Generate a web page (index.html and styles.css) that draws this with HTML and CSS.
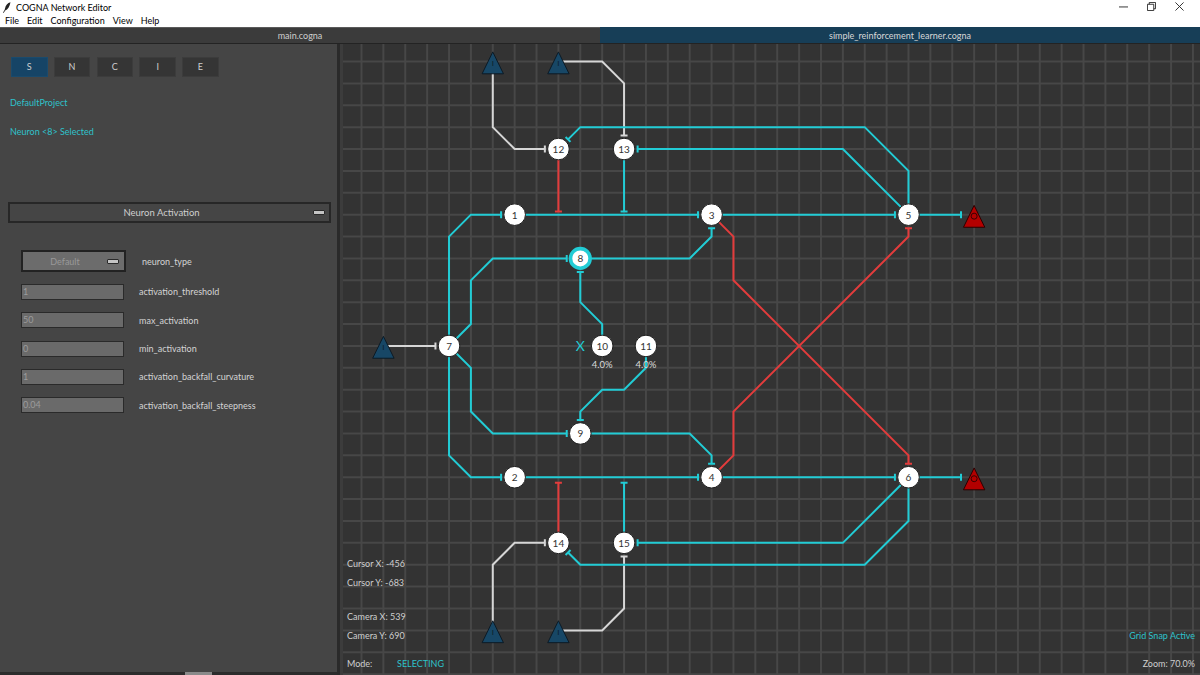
FILE: index.html
```html
<!DOCTYPE html>
<html lang="en">
<head>
<meta charset="utf-8">
<title>COGNA Network Editor</title>
<link rel="stylesheet" href="styles.css">
</head>
<body>
<div class="app">
  <header class="titlebar">
    <div class="title">
      <svg class="feather" width="9" height="11" viewBox="0 0 9 11"><path d="M8.5 0.3 C5.5 1 3.6 3.4 3 6.4 L2.6 8 L1 10.6 L1.6 10.9 L3.2 8.6 C5.8 7.8 7.6 4.8 8.5 0.3 Z" fill="#222"/></svg>
      <span>COGNA Network Editor</span>
    </div>
    <div class="winctrls">
      <span class="wc"><svg width="10" height="10" viewBox="0 0 10 10"><path d="M0 5.5H10" stroke="#222" stroke-width="1"/></svg></span>
      <span class="wc"><svg width="10" height="10" viewBox="0 0 10 10"><path d="M0.5 2.5H7.5V9.5H0.5Z M2.5 2.5V0.5H9.5V7.5H7.5" fill="none" stroke="#222" stroke-width="1"/></svg></span>
      <span class="wc"><svg width="10" height="10" viewBox="0 0 10 10"><path d="M0.5 0.5L9.5 9.5M9.5 0.5L0.5 9.5" stroke="#222" stroke-width="1"/></svg></span>
    </div>
  </header>
  <nav class="menubar">
    <span>File</span><span>Edit</span><span>Configuration</span><span>View</span><span>Help</span>
  </nav>
  <div class="tabs">
    <div class="tab">main.cogna</div>
    <div class="tab active">simple_reinforcement_learner.cogna</div>
  </div>
  <main class="workspace">
    <aside class="sidebar">
      <div class="modes">
        <div class="mode active">S</div>
        <div class="mode">N</div>
        <div class="mode">C</div>
        <div class="mode">I</div>
        <div class="mode">E</div>
      </div>
      <div class="info project">DefaultProject</div>
      <div class="info selected">Neuron &lt;8&gt; Selected</div>
      <div class="section-select">
        <span class="sel-label">Neuron Activation</span>
        <span class="indicator"></span>
      </div>
      <div class="form">
        <div class="row first">
          <div class="combo"><span class="sel-label">Default</span><span class="indicator"></span></div>
          <span class="label">neuron_type</span>
        </div>
        <div class="row"><div class="field">1</div><span class="label">activation_threshold</span></div>
        <div class="row"><div class="field">50</div><span class="label">max_activation</span></div>
        <div class="row"><div class="field">0</div><span class="label">min_activation</span></div>
        <div class="row"><div class="field">1</div><span class="label">activation_backfall_curvature</span></div>
        <div class="row"><div class="field">0.04</div><span class="label">activation_backfall_steepness</span></div>
      </div>
      <div class="hscroll"><div class="thumb"></div></div>
    </aside>
    <div class="splitter"></div>
    <section class="canvas">
      <svg class="board" width="857" height="631" viewBox="343 44 857 631">
        <g transform="translate(361.5 61.5) scale(21.88)">
          <path class="grid" d="M-1 -2V29M0 -2V29M1 -2V29M2 -2V29M3 -2V29M4 -2V29M5 -2V29M6 -2V29M7 -2V29M8 -2V29M9 -2V29M10 -2V29M11 -2V29M12 -2V29M13 -2V29M14 -2V29M15 -2V29M16 -2V29M17 -2V29M18 -2V29M19 -2V29M20 -2V29M21 -2V29M22 -2V29M23 -2V29M24 -2V29M25 -2V29M26 -2V29M27 -2V29M28 -2V29M29 -2V29M30 -2V29M31 -2V29M32 -2V29M33 -2V29M34 -2V29M35 -2V29M36 -2V29M37 -2V29M38 -2V29M-2 -1H39M-2 0H39M-2 1H39M-2 2H39M-2 3H39M-2 4H39M-2 5H39M-2 6H39M-2 7H39M-2 8H39M-2 9H39M-2 10H39M-2 11H39M-2 12H39M-2 13H39M-2 14H39M-2 15H39M-2 16H39M-2 17H39M-2 18H39M-2 19H39M-2 20H39M-2 21H39M-2 22H39M-2 23H39M-2 24H39M-2 25H39M-2 26H39M-2 27H39M-2 28H39"/>

          <!-- input connections (gray) -->
          <path class="link g" d="M6 0V3L7 4H8.38M8.38 3.84V4.16"/>
          <path class="link g" d="M9 0H11L12 1V3.38M11.84 3.38H12.16"/>
          <path class="link g" d="M1 13H3.38M3.38 12.84V13.16"/>
          <path class="link g" d="M6 26V23L7 22H8.38M8.38 21.84V22.16"/>
          <path class="link g" d="M9 26H11L12 25V22.62M11.84 22.62H12.16"/>

          <!-- excitatory (cyan) -->
          <path class="link c" d="M25 7V5L23 3H10L9.44 3.56M9.327 3.447L9.553 3.673"/>
          <path class="link c" d="M25 7L22 4H12.62M12.62 3.84V4.16"/>
          <path class="link c" d="M12 4V6.86M11.84 6.86H12.16"/>
          <path class="link c" d="M4 13V8L5 7H6.38M6.38 6.84V7.16"/>
          <path class="link c" d="M7 7H15.38M15.38 6.84V7.16"/>
          <path class="link c" d="M16 7H24.38M24.38 6.84V7.16"/>
          <path class="link c" d="M25 7H27.4M27.4 6.84V7.16"/>
          <path class="link c" d="M4 13L5 12V10L6 9H9.38M9.38 8.84V9.16"/>
          <path class="link c" d="M10 9H15L16 8V7.62M15.84 7.62H16.16"/>
          <path class="link c" d="M11 13V12L10 11V9.62M9.84 9.62H10.16"/>
          <path class="link c" d="M13 13V14L12 15H11L10 16V16.38M9.84 16.38H10.16"/>
          <path class="link c" d="M4 13L5 14V16L6 17H9.38M9.38 16.84V17.16"/>
          <path class="link c" d="M10 17H15L16 18V18.38M15.84 18.38H16.16"/>
          <path class="link c" d="M4 13V18L5 19H6.38M6.38 18.84V19.16"/>
          <path class="link c" d="M7 19H15.38M15.38 18.84V19.16"/>
          <path class="link c" d="M16 19H24.38M24.38 18.84V19.16"/>
          <path class="link c" d="M25 19H27.4M27.4 18.84V19.16"/>
          <path class="link c" d="M12 22V19.25M11.84 19.25H12.16"/>
          <path class="link c" d="M25 19V21L23 23H10L9.44 22.44M9.327 22.553L9.553 22.327"/>
          <path class="link c" d="M25 19L22 22H12.62M12.62 21.84V22.16"/>

          <!-- inhibitory (red) -->
          <path class="link r" d="M9 4V6.86M8.84 6.86H9.16"/>
          <path class="link r" d="M9 22V19.25M8.84 19.25H9.16"/>
          <path class="link r" d="M16 7L17 8V10L25 18V18.38M24.84 18.38H25.16"/>
          <path class="link r" d="M16 19L17 18V16L25 8V7.62M24.84 7.62H25.16"/>

          <!-- input triangles -->
          <g class="tin" transform="translate(6 0) scale(0.0457)"><polygon points="-10.7,12.3 0,-9.6 10.7,12.3"/><text y="2">I</text></g>
          <g class="tin" transform="translate(9 0) scale(0.0457)"><polygon points="-10.7,12.3 0,-9.6 10.7,12.3"/><text y="2">I</text></g>
          <g class="tin" transform="translate(1 13) scale(0.0457)"><polygon points="-10.7,12.3 0,-9.6 10.7,12.3"/><text y="2">I</text></g>
          <g class="tin" transform="translate(6 26) scale(0.0457)"><polygon points="-10.7,12.3 0,-9.6 10.7,12.3"/><text y="2">I</text></g>
          <g class="tin" transform="translate(9 26) scale(0.0457)"><polygon points="-10.7,12.3 0,-9.6 10.7,12.3"/><text y="2">I</text></g>

          <!-- output triangles -->
          <g class="tout" transform="translate(28 7) scale(0.0457)"><polygon points="-10.7,12.6 0,-9.3 10.7,12.6"/><circle cy="1.5" r="3"/></g>
          <g class="tout" transform="translate(28 19) scale(0.0457)"><polygon points="-10.7,12.6 0,-9.3 10.7,12.6"/><circle cy="1.5" r="3"/></g>

          <!-- neurons -->
          <g class="node" transform="translate(7 7) scale(0.0457)"><circle r="10.8"/><text>1</text></g>
          <g class="node" transform="translate(7 19) scale(0.0457)"><circle r="10.8"/><text>2</text></g>
          <g class="node" transform="translate(16 7) scale(0.0457)"><circle r="10.8"/><text>3</text></g>
          <g class="node" transform="translate(16 19) scale(0.0457)"><circle r="10.8"/><text>4</text></g>
          <g class="node" transform="translate(25 7) scale(0.0457)"><circle r="10.8"/><text>5</text></g>
          <g class="node" transform="translate(25 19) scale(0.0457)"><circle r="10.8"/><text>6</text></g>
          <g class="node" transform="translate(4 13) scale(0.0457)"><circle r="10.8"/><text>7</text></g>
          <g class="node sel" transform="translate(10 9) scale(0.0457)"><circle r="9.8"/><text>8</text></g>
          <g class="node" transform="translate(10 17) scale(0.0457)"><circle r="10.8"/><text>9</text></g>
          <g class="node" transform="translate(11 13) scale(0.0457)"><circle r="10.8"/><text>10</text><text class="pct" y="18.5">4.0%</text></g>
          <g class="node" transform="translate(13 13) scale(0.0457)"><circle r="10.8"/><text>11</text><text class="pct" y="18.5">4.0%</text></g>
          <g class="node" transform="translate(9 4) scale(0.0457)"><circle r="10.8"/><text>12</text></g>
          <g class="node" transform="translate(12 4) scale(0.0457)"><circle r="10.8"/><text>13</text></g>
          <g class="node" transform="translate(9 22) scale(0.0457)"><circle r="10.8"/><text>14</text></g>
          <g class="node" transform="translate(12 22) scale(0.0457)"><circle r="10.8"/><text>15</text></g>

          <g class="mark" transform="translate(10 13) scale(0.0457)"><text>X</text></g>
        </g>
      </svg>
      <div class="hud hud-left">
        <div>Cursor X: -456</div>
        <div class="tight">Cursor Y: -683</div>
        <div class="wide">Camera X: 539</div>
        <div class="tight">Camera Y: 690</div>
        <div class="mode-line"><span class="mode-key">Mode:</span><span class="accent">SELECTING</span></div>
      </div>
      <div class="hud hud-right">
        <div class="accent">Grid Snap Active</div>
        <div class="zoom">Zoom: 70.0%</div>
      </div>
    </section>
  </main>
</div>
</body>
</html>
```
FILE: styles.css
```css
* { box-sizing: border-box; }

html, body {
  margin: 0;
  padding: 0;
}

body {
  width: 1200px;
  height: 675px;
  overflow: hidden;
  font-family: Lato, "Noto Sans", "Liberation Sans", sans-serif;
  font-size: 9px;
  background: #454545;
}

.app {
  display: flex;
  flex-direction: column;
  width: 1200px;
  height: 675px;
}

/* ---------- title / menu ---------- */
.titlebar {
  height: 13px;
  background: #ffffff;
  display: flex;
  align-items: center;
  justify-content: space-between;
  color: #000;
  font-size: 9px;
}

.title {
  display: flex;
  align-items: center;
  gap: 5px;
  padding-left: 2px;
  padding-top: 1px;
}

.feather { display: block; }

.winctrls {
  display: flex;
  padding-right: 7px;
}

.wc {
  width: 28px;
  height: 13px;
  display: flex;
  align-items: center;
  justify-content: center;
}

.wc svg { display: block; width: 9px; height: 9px; }

.menubar {
  height: 14px;
  background: #ffffff;
  display: flex;
  align-items: center;
  gap: 8px;
  padding-left: 5px;
  color: #000;
  font-size: 9px;
}

/* ---------- tabs ---------- */
.tabs {
  height: 17px;
  display: grid;
  grid-template-columns: 600px 600px;
  border-bottom: 1px solid #232323;
}

.tab {
  display: flex;
  align-items: center;
  justify-content: center;
  background: #3b3b3b;
  border-top: 1px solid #5a5a5a;
  color: #cfcfcf;
  font-size: 9px;
}

.tab.active {
  background: #173e57;
  border-top-color: #173e57;
  color: #d8d8d8;
}

/* ---------- workspace ---------- */
.workspace {
  flex: 1;
  display: flex;
  min-height: 0;
}

.sidebar {
  width: 337px;
  background: #454545;
  display: flex;
  flex-direction: column;
  padding-top: 13px;
}

.splitter {
  width: 6px;
  border-left: 3px solid #2a2a2a;
  background: #3c3c3c;
}

.modes {
  display: flex;
  gap: 6.3px;
  margin-left: 11px;
}

.mode {
  width: 36.5px;
  height: 19.5px;
  background: #353535;
  border: 1px solid #3c3c3c;
  color: #cdcdcd;
  display: flex;
  align-items: center;
  justify-content: center;
  font-size: 9px;
}

.mode.active {
  background: #164466;
  border-color: #1a4a6c;
}

.info {
  color: #2ec2cb;
  line-height: 12px;
  margin-left: 10px;
  font-size: 9px;
}

.project { margin-top: 20.5px; }
.selected { margin-top: 16.5px; }

.section-select {
  margin: 64.5px 0 0 8px;
  width: 323px;
  height: 21px;
  border: 2px solid #272727;
  background: #454545;
  display: flex;
  align-items: center;
  color: #cfcfcf;
  font-size: 9.5px;
}

.sel-label {
  flex: 1;
  text-align: center;
}

.indicator {
  width: 12px;
  height: 5px;
  background: #c4c4c4;
  border: 1px solid #2a2a2a;
  border-radius: 1px;
  margin-right: 4px;
}

.form {
  margin-top: 27px;
  margin-left: 21px;
  display: flex;
  flex-direction: column;
}

.row {
  height: 28.3px;
  display: flex;
  align-items: center;
}

.row.first {
  height: 22px;
  margin-bottom: 5.8px;
}

.combo {
  width: 105px;
  height: 22px;
  background: #6c6c6c;
  border: 2px solid #222;
  display: flex;
  align-items: center;
  color: #999;
  font-size: 9px;
}

.combo .indicator { margin-right: 5px; }

.row.first .label { margin-left: 16px; }

.field {
  width: 103px;
  height: 16px;
  background: #6a6a6a;
  border: 1px solid #2a2a2a;
  color: #9c9c9c;
  font-size: 9px;
  line-height: 14px;
  padding-left: 1px;
}

.label {
  margin-left: 15px;
  color: #d4d4d4;
  font-size: 9px;
}

.hscroll {
  margin-top: auto;
  height: 3px;
  background: #2c2c2c;
}

.thumb {
  margin-left: 185px;
  width: 27px;
  height: 3px;
  background: #8a8a8a;
}

/* ---------- canvas ---------- */
.canvas {
  flex: 1;
  position: relative;
  background: #333333;
  overflow: hidden;
}

.board { display: block; }

.grid {
  fill: none;
  stroke: #474747;
  stroke-width: 2;
  vector-effect: non-scaling-stroke;
}

.link {
  fill: none;
  stroke-width: 2;
  vector-effect: non-scaling-stroke;
  stroke-linejoin: miter;
}

.link.c { stroke: #22ccd5; }
.link.r { stroke: #e33c3c; }
.link.g { stroke: #d6d6d6; }

.node circle {
  fill: #ffffff;
  stroke: #1c1c1c;
  stroke-width: 1;
}

.node.sel circle {
  stroke: #22ccd5;
  stroke-width: 3.6;
}

.node text {
  font-family: Lato, "Noto Sans", sans-serif;
  font-size: 10px;
  fill: #333;
  text-anchor: middle;
  dominant-baseline: central;
}

.node text.pct {
  fill: #dcdcdc;
  font-size: 9.5px;
}

.mark text {
  font-family: Lato, "Noto Sans", sans-serif;
  font-size: 14px;
  fill: #22ccd5;
  text-anchor: middle;
  dominant-baseline: central;
}

.tin polygon {
  fill: #174766;
  stroke: #0c1a25;
  stroke-width: 1;
}

.tin text {
  font-family: "Liberation Sans", sans-serif;
  font-size: 8px;
  fill: #0b1c29;
  text-anchor: middle;
  dominant-baseline: central;
}

.tout polygon {
  fill: #b30000;
  stroke: #2a0000;
  stroke-width: 1;
}

.tout circle {
  fill: none;
  stroke: #3a0000;
  stroke-width: 1;
}

.hud {
  position: absolute;
  display: flex;
  flex-direction: column;
  color: #cfcfcf;
  font-size: 9px;
  line-height: 12px;
}

.hud-left {
  left: 4px;
  top: 514px;
}

.hud-left .tight { margin-top: 7px; }
.hud-left .wide { margin-top: 22px; }
.hud-left .mode-line {
  margin-top: 16px;
  display: flex;
}

.mode-key { width: 50px; }

.accent { color: #2ec2cb; }

.hud-right {
  right: 5px;
  top: 586px;
  align-items: flex-end;
}

.hud-right .zoom { margin-top: 16px; }
```
